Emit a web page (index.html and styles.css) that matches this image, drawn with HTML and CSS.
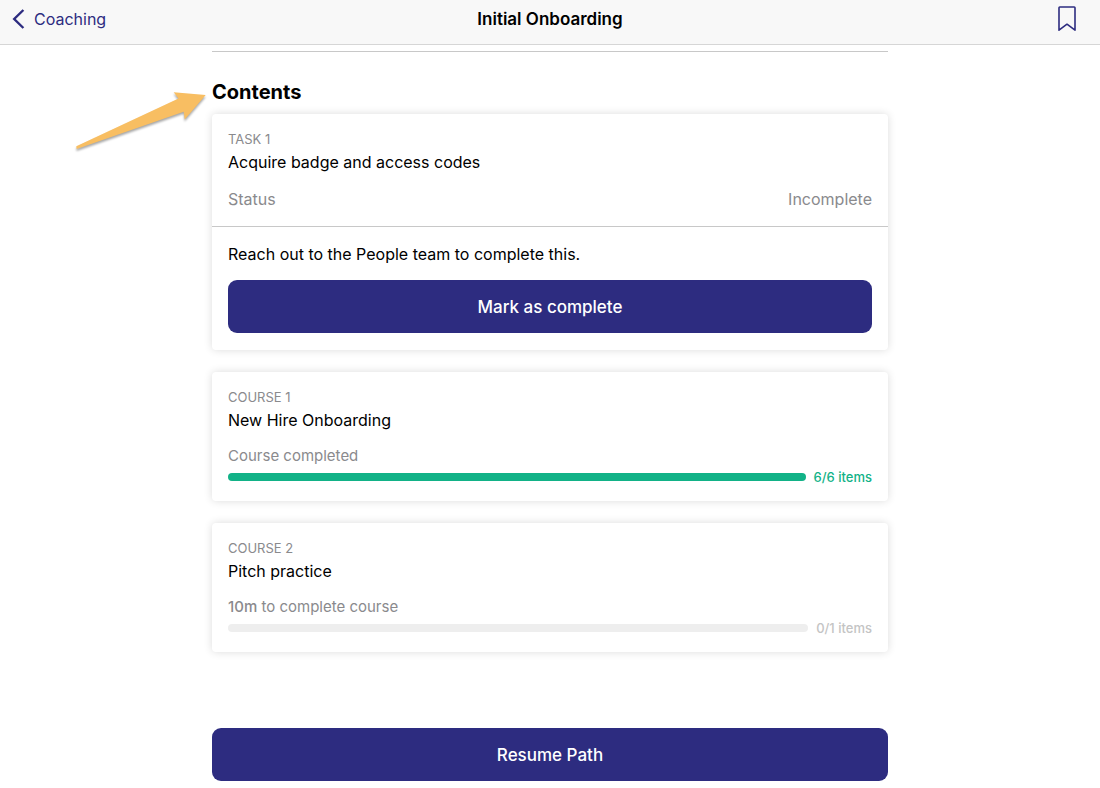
FILE: index.html
```html
<!DOCTYPE html>
<html lang="en">
	<head>
		<meta charset="UTF-8" />
		<meta name="viewport" content="width=device-width, initial-scale=1.0" />
		<title>Initial Onboarding</title>
		<link rel="stylesheet" href="styles.css">
	</head>
	<body>
		<header class="navbar">
			<a class="back" href="#">
				<svg width="14" height="22" viewBox="0 0 14 22" aria-hidden="true">
					<path d="M11.4 2 2.2 11 11.4 20" fill="none" stroke="currentColor" stroke-width="2.4" />
				</svg>
				Coaching
			</a>
			<h1>Initial Onboarding</h1>
			<button class="bookmark" type="button" aria-label="Bookmark">
				<svg width="20" height="26" viewBox="0 0 20 26" aria-hidden="true">
					<path d="M2 1.8Q2 1 2.8 1H17.2Q18 1 18 1.8V24.2L10 18.2 2 24.2Z" fill="none" stroke="currentColor" stroke-width="1.6" stroke-linejoin="round" />
				</svg>
			</button>
		</header>

		<main class="content">
			<svg class="arrow" width="140" height="66" viewBox="0 0 140 66" aria-hidden="true">
				<path d="M6.3 55.2 108.5 7.5 103.7 1.3 135.7 4 114.7 28.5 113.7 20.7 6.6 58Z" />
			</svg>

			<h2>Contents</h2>

			<section class="card">
				<div class="summary">
					<p class="label">TASK 1</p>
					<h3>Acquire badge and access codes</h3>
					<div class="status">
						<span>Status</span>
						<span>Incomplete</span>
					</div>
				</div>
				<div class="details">
					<p>Reach out to the People team to complete this.</p>
					<button class="btn" type="button">Mark as complete</button>
				</div>
			</section>

			<section class="card course">
				<p class="label">COURSE 1</p>
				<h3>New Hire Onboarding</h3>
				<p class="meta">Course completed</p>
				<div class="track done">
					<progress id="course1" value="6" max="6"></progress>
					<label for="course1">6/6 items</label>
				</div>
			</section>

			<section class="card course">
				<p class="label">COURSE 2</p>
				<h3>Pitch practice</h3>
				<p class="meta"><b>10m</b> to complete course</p>
				<div class="track">
					<progress id="course2" value="0" max="1"></progress>
					<label for="course2">0/1 items</label>
				</div>
			</section>

			<button class="btn resume" type="button">Resume Path</button>
		</main>
	</body>
</html>
```

FILE: styles.css
```css
* {
	margin: 0;
	padding: 0;
	box-sizing: border-box;
}
body {
	background-color: #fff;
	color: #000;
	font-family: Inter, "Liberation Sans", sans-serif;
	font-size: 16px;
	line-height: 24px;
}
button {
	font: inherit;
	border: none;
	cursor: pointer;
}
.navbar {
	display: grid;
	grid-template-columns: 1fr auto 1fr;
	align-items: center;
	padding: 3px 12px 9px;
	background-color: #f8f8f8;
	border-bottom: 1px solid #d6d6d6;

	h1 {
		font-size: 17px;
		font-weight: 600;
	}
	.back {
		display: flex;
		align-items: center;
		gap: 8px;
		color: #2d2c80;
		text-decoration: none;
	}
	.bookmark {
		display: flex;
		justify-self: end;
		padding: 3px 11px 3px 0;
		background: none;
		color: #2d2c80;
	}
}
.content {
	position: relative;
	display: flex;
	flex-direction: column;
	width: calc(100% - 32px);
	max-width: 676px;
	margin: 6px auto;
	border-top: 1px solid #c8c8c8;

	h2 {
		margin: 28px 0 10px;
		font-size: 20px;
		font-weight: 700;
	}
}
/* annotation arrow, lies over the page margin */
.arrow {
	position: absolute;
	top: 39px;
	right: 100%;
	margin-right: 2px;
	fill: #f8be62;
	filter: drop-shadow(0 2px 1px rgb(0 0 0 / 35%));
}
.card {
	margin-bottom: 22px;
	border-radius: 4px;
	background-color: #fff;
	box-shadow: 0 0 8px rgb(0 0 0 / 14%);

	h3 {
		font-size: 16px;
		font-weight: 400;
	}
	.label {
		margin-bottom: 2px;
		color: #8a8a8d;
		font-size: 13px;
		line-height: 18px;
	}
	.summary {
		padding: 16px 16px 15px;
		border-bottom: 1px solid #c8c8c8;
	}
	.status {
		display: flex;
		justify-content: space-between;
		margin-top: 13px;
		color: #8a8a8d;
	}
	.details {
		display: flex;
		flex-direction: column;
		gap: 14px;
		padding: 15px 16px 17px;
	}
}
.course {
	padding: 16px 16px 15px;

	.meta {
		margin: 14px 0 2px;
		color: #8a8a8d;
		font-size: 15px;
		line-height: 20px;

		b {
			font-weight: 500;
		}
	}
	.track {
		display: flex;
		align-items: center;
		gap: 8px;
		color: #c4c4c4;
		font-size: 13px;
		font-weight: 500;
		line-height: 18px;
	}
	.done {
		color: #12b287;
	}
	progress {
		flex: 1;
		min-width: 0;
		height: 8px;
		border-radius: 4px;
		overflow: hidden;
		appearance: none;
	}
	progress::-webkit-progress-bar {
		background-color: #eee;
	}
	progress::-webkit-progress-value {
		background-color: #12b287;
	}
}
.btn {
	width: 100%;
	min-height: 53px;
	border-radius: 9px;
	background-color: #2d2c80;
	color: #fff;
	font-size: 17px;
	font-weight: 500;
}
.resume {
	margin-top: 54px;
}
```
